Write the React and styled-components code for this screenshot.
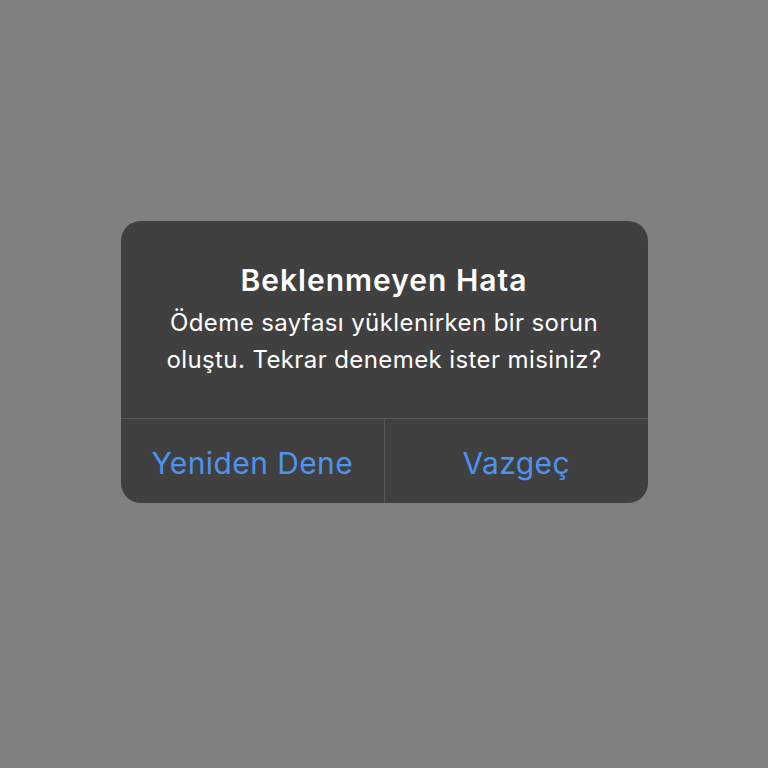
import React from 'react'
import styled, { createGlobalStyle } from 'styled-components'

const Global = createGlobalStyle`
   html, body {
      margin: 0;
      padding: 0;
      background: #808080;
   }
   body {
      font-family: Inter, "Noto Sans", "Liberation Sans", sans-serif;
      -webkit-font-smoothing: antialiased;
   }
`;

const Screen = styled.div`
   width: 768px;
   height: 768px;
   display: flex;
   justify-content: center;
   padding-top: 221px;
   box-sizing: border-box;
`;

const Alert = styled.div`
   width: 527px;
   height: 282px;
   align-self: flex-start;
   background-color: #404040;
   border-radius: 20px;
   display: flex;
   flex-direction: column;
   overflow: hidden;
`;

const Content = styled.div`
   height: 197px;
   box-sizing: border-box;
   padding: 42px 16px 0;
   text-align: center;
   color: #ffffff;
`;

const Title = styled.h2`
   margin: 0;
   font-size: 30px;
   line-height: 34px;
   font-weight: 600;
   letter-spacing: 1px;
`;

const Message = styled.p`
   margin: 7px 0 0;
   font-size: 24px;
   line-height: 37px;
   font-weight: 400;
   letter-spacing: 0.4px;
`;

const Actions = styled.div`
   flex: 1;
   display: grid;
   grid-template-columns: 1fr 1fr;
   border-top: 1px solid #585858;
`;

const Action = styled.button`
   background: none;
   border: none;
   border-left: ${p => (p.$first ? 'none' : '1px solid #585858')};
   font-family: inherit;
   font-size: 30px;
   font-weight: 400;
   letter-spacing: 0.4px;
   color: #4d94f0;
   padding: 4px 0 0;
   cursor: pointer;
`;

const App = () => {
   return (
      <>
         <Global />
         <Screen>
            <Alert>
               <Content>
                  <Title>Beklenmeyen Hata</Title>
                  <Message>
                     Ödeme sayfası yüklenirken bir sorun<br />
                     oluştu. Tekrar denemek ister misiniz?
                  </Message>
               </Content>
               <Actions>
                  <Action $first>Yeniden Dene</Action>
                  <Action>Vazgeç</Action>
               </Actions>
            </Alert>
         </Screen>
      </>
   )
}
export default App
